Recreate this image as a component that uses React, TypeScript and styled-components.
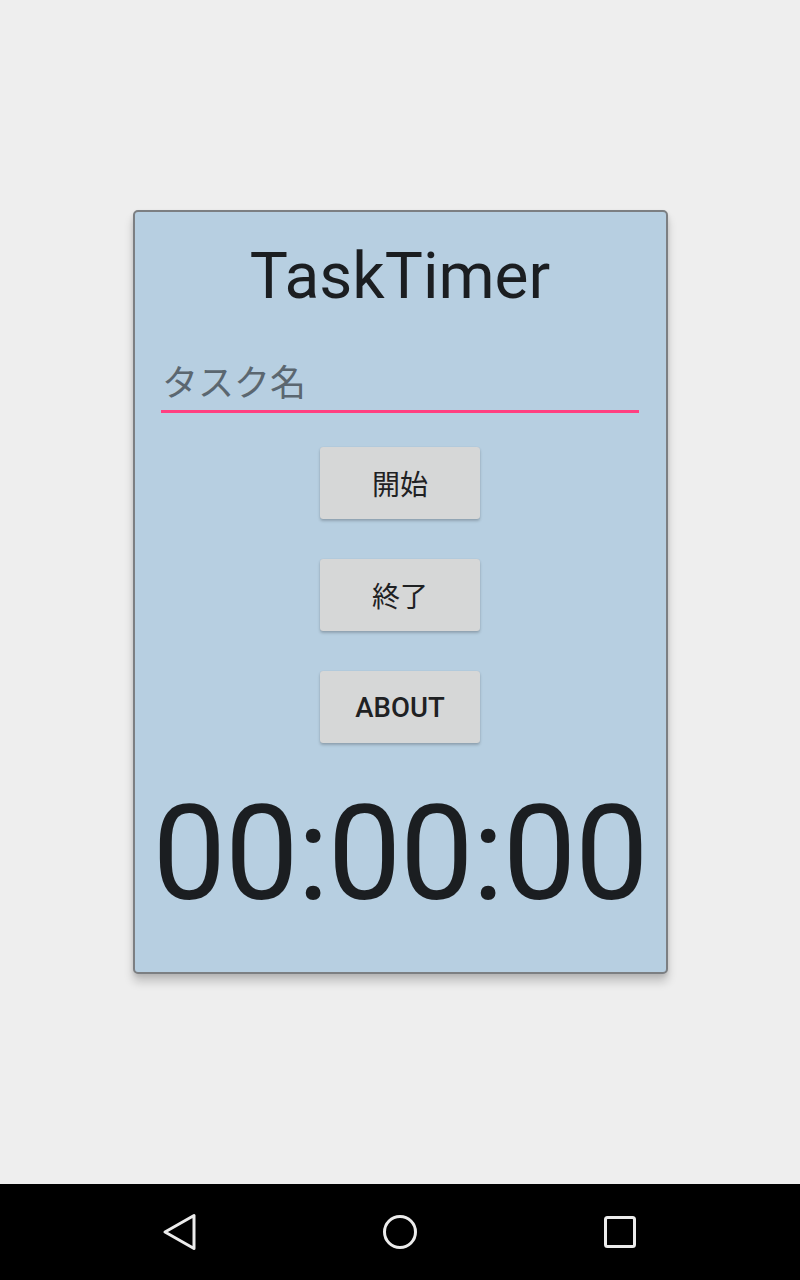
import React from "react";
import styled, { createGlobalStyle } from "styled-components";

const Global = createGlobalStyle`
  html, body { margin: 0; padding: 0; background: #eeeeee; }
  body { font-family: Roboto, "Noto Sans CJK JP", sans-serif; }
  * { box-sizing: border-box; }
`;

const Screen = styled.div`
  width: 800px;
  height: 1280px;
  display: flex;
  flex-direction: column;
  background: #eeeeee;
`;

const Main = styled.main`
  flex: 1;
  display: flex;
  flex-direction: column;
  align-items: center;
  padding-top: 210px;
`;

const Card = styled.section`
  width: 535px;
  height: 764px;
  background: #b7cfe1;
  border: 2px solid #7c7f82;
  border-radius: 5px;
  box-shadow: 0 8px 10px rgba(0, 0, 0, 0.18), 0 2px 4px rgba(0, 0, 0, 0.1);
  display: flex;
  flex-direction: column;
  align-items: center;
  padding-top: 27px;
`;

const Title = styled.h1`
  margin: 0;
  font-family: Roboto, sans-serif;
  font-weight: 400;
  font-size: 64px;
  line-height: 75px;
  color: #1b1e21;
`;

const NameInput = styled.input`
  margin-top: 38px;
  width: 478px;
  height: 61px;
  border: none;
  border-bottom: 3px solid #ff4081;
  background: transparent;
  outline: none;
  padding: 0 0 2px 1px;
  font-family: "Noto Sans CJK JP", sans-serif;
  font-size: 36px;
  color: #1b1e21;
  &::placeholder {
    color: #5b6770;
  }
`;

const ButtonStack = styled.div`
  margin-top: 34px;
  display: flex;
  flex-direction: column;
  gap: 40px;
`;

const Button = styled.button<{ $latin?: boolean }>`
  width: 160px;
  height: 72px;
  border: none;
  border-radius: 3px;
  background: #d6d7d7;
  box-shadow: 0 2px 3px rgba(0, 0, 0, 0.22), 0 0 1px rgba(0, 0, 0, 0.12);
  color: #1f2123;
  font-family: ${(p) => (p.$latin ? "Roboto, sans-serif" : "'Noto Sans CJK JP', sans-serif")};
  font-weight: ${(p) => (p.$latin ? 500 : 400)};
  font-size: ${(p) => (p.$latin ? "27.5px" : "28px")};
  padding: 0;
`;

const Clock = styled.div`
  margin-top: 35px;
  font-family: Roboto, sans-serif;
  font-weight: 400;
  font-size: 131px;
  letter-spacing: -1.3px;
  line-height: 152px;
  color: #1b1e21;
  white-space: nowrap;
`;

const NavBar = styled.nav`
  height: 96px;
  background: #000;
  display: flex;
  align-items: center;
  justify-content: space-between;
  padding: 0 160px 0 158px;
`;

const NavIcon = styled.svg`
  width: 48px;
  height: 48px;
  display: block;
`;

export default function App() {
  return (
    <>
      <Global />
      <Screen>
        <Main>
          <Card>
            <Title>TaskTimer</Title>
            <NameInput placeholder="タスク名" />
            <ButtonStack>
              <Button>開始</Button>
              <Button>終了</Button>
              <Button $latin>ABOUT</Button>
            </ButtonStack>
            <Clock>00:00:00</Clock>
          </Card>
        </Main>
        <NavBar>
          <NavIcon viewBox="0 0 48 48">
            <path
              d="M7 24 L36 7.5 L36 40.5 Z"
              fill="none"
              stroke="#ececec"
              strokeWidth="3"
              strokeLinejoin="round"
            />
          </NavIcon>
          <NavIcon viewBox="0 0 48 48">
            <circle cx="25" cy="24" r="15.5" fill="none" stroke="#ececec" strokeWidth="3" />
          </NavIcon>
          <NavIcon viewBox="0 0 48 48">
            <rect
              x="13.5"
              y="9.5"
              width="29"
              height="29"
              rx="2"
              fill="none"
              stroke="#ececec"
              strokeWidth="3"
            />
          </NavIcon>
        </NavBar>
      </Screen>
    </>
  );
}
